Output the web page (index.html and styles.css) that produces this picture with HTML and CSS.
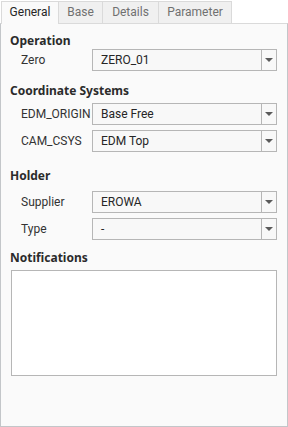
FILE: index.html
```html
<!DOCTYPE html>
<html lang="en">
<head>
    <meta charset="UTF-8">
    <meta name="viewport" content="width=device-width, initial-scale=1.0">
    <title>Zero Point Settings</title>
    <link rel="stylesheet" href="styles.css">
</head>
<body>
    <div class="window">
        <div class="tabs">
            <div class="tab active">General</div>
            <div class="tab">Base</div>
            <div class="tab">Details</div>
            <div class="tab">Parameter</div>
        </div>

        <div class="panel">
            <div class="group group-operation">
                <div class="group-title">Operation</div>
                <div class="row">
                    <span class="row-label">Zero</span>
                    <div class="combo"><span class="combo-text">ZERO_01</span><span class="combo-btn"></span></div>
                </div>
            </div>

            <div class="group group-csys">
                <div class="group-title">Coordinate Systems</div>
                <div class="row">
                    <span class="row-label">EDM_ORIGIN</span>
                    <div class="combo"><span class="combo-text">Base Free</span><span class="combo-btn"></span></div>
                </div>
                <div class="row">
                    <span class="row-label">CAM_CSYS</span>
                    <div class="combo"><span class="combo-text">EDM Top</span><span class="combo-btn"></span></div>
                </div>
            </div>

            <div class="group group-holder">
                <div class="group-title">Holder</div>
                <div class="row">
                    <span class="row-label">Supplier</span>
                    <div class="combo"><span class="combo-text">EROWA</span><span class="combo-btn"></span></div>
                </div>
                <div class="row">
                    <span class="row-label">Type</span>
                    <div class="combo"><span class="combo-text">-</span><span class="combo-btn"></span></div>
                </div>
            </div>

            <div class="group group-notes">
                <div class="group-title">Notifications</div>
                <div class="notes"></div>
            </div>
        </div>
    </div>
</body>
</html>
```

FILE: styles.css
```css
body {
    margin: 0;
    background: #ffffff;
    font-family: Roboto, "Noto Sans", sans-serif;
    font-size: 12px;
    color: #2b2b2b;
}

.window {
    width: 288px;
    height: 427px;
    display: flex;
    flex-direction: column;
}

/* Tabs */
.tabs {
    display: flex;
    height: 23px;
    padding: 1px 0 0 1px;
    box-sizing: border-box;
    position: relative;
    z-index: 1;
}

.tab {
    box-sizing: border-box;
    height: 22px;
    line-height: 21px;
    text-align: center;
    background: #f0f0f0;
    color: #707070;
    border: 1px solid #dadada;
    border-left: none;
    border-bottom: none;
}

.tab.active {
    height: 23px;
    background: #fafafa;
    color: #262626;
    border-left: 1px solid #dadada;
}

.tab:nth-child(1) { width: 58px; }
.tab:nth-child(2) { width: 44px; }
.tab:nth-child(3) { width: 56px; }
.tab:nth-child(4) { width: 73px; }

/* Panel */
.panel {
    flex: 1;
    box-sizing: border-box;
    background: #fafafa;
    border: 1px solid #c3c6c9;
    border-top-color: #dadada;
    padding: 9px 10px 0 9px;
}

.group {
    display: flex;
    flex-direction: column;
    gap: 5px;
}

.group-title {
    font-family: "Noto Sans", Roboto, sans-serif;
    font-weight: bold;
    line-height: 16px;
    color: #2b2b2b;
}

.group-operation .group-title { margin-bottom: -5px; }
.group-csys { margin-top: 12px; }
.group-csys .group-title { margin-bottom: -1px; }
.group-holder { margin-top: 16px; }
.group-holder .group-title { margin-bottom: 2px; }
.group-notes { margin-top: 10px; }
.group-notes .group-title { margin-bottom: -1px; }

.row {
    display: flex;
    align-items: center;
    height: 22px;
}

.row-label {
    width: 82px;
    flex: none;
    padding-left: 11px;
    box-sizing: border-box;
    color: #333;
    white-space: nowrap;
}

.combo {
    flex: 1;
    display: flex;
    height: 22px;
    box-sizing: border-box;
    border: 1px solid #b6b6b6;
    background: #f8f8f8;
}

.combo-text {
    flex: 1;
    padding-left: 8px;
    line-height: 20px;
    color: #262626;
}

.combo-btn {
    width: 14px;
    border-left: 1px solid #b6b6b6;
    position: relative;
}

.combo-btn:after {
    content: "";
    position: absolute;
    left: 3px;
    top: 8px;
    border-left: 4px solid transparent;
    border-right: 4px solid transparent;
    border-top: 4px solid #5a5a5a;
}

.notes {
    margin-left: 1px;
    height: 106px;
    box-sizing: border-box;
    border: 1px solid #b6b6b6;
    background: #ffffff;
}
```
